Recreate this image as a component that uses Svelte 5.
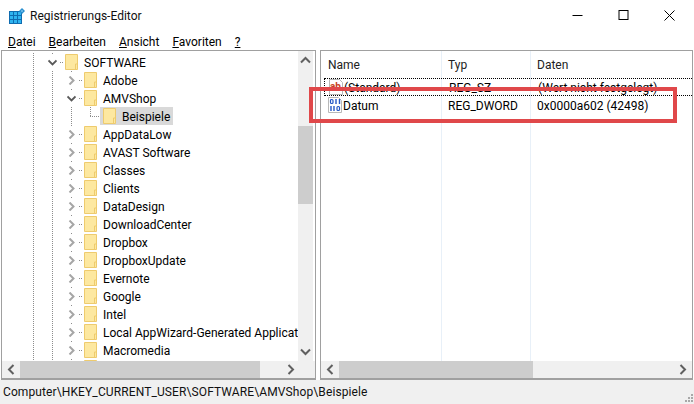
<script lang="ts">
  // Registrierungs-Editor window
  type Row = { name: string; level: number; exp?: "open" | "closed"; selected?: boolean };

  const menu = [
    ["D", "atei"],
    ["B", "earbeiten"],
    ["A", "nsicht"],
    ["F", "avoriten"],
    ["?", ""],
  ];

  const closed = [
    "AppDataLow",
    "AVAST Software",
    "Classes",
    "Clients",
    "DataDesign",
    "DownloadCenter",
    "Dropbox",
    "DropboxUpdate",
    "Evernote",
    "Google",
    "Intel",
    "Local AppWizard-Generated Applicat",
    "Macromedia",
    "",
  ];

  const rows: Row[] = [
    { name: "SOFTWARE", level: 2, exp: "open" },
    { name: "Adobe", level: 3, exp: "closed" },
    { name: "AMVShop", level: 3, exp: "open" },
    { name: "Beispiele", level: 4, selected: true },
    ...closed.map((name): Row => ({ name, level: 3, exp: "closed" })),
  ];
</script>

<div class="window">
  <header class="titlebar">
    <svg class="appicon" width="16" height="16" viewBox="0 0 16 16">
      <rect x="0" y="3" width="13" height="13" fill="#0f6cb0" />
      <path d="M1 4h3v3H1zM5 4h3v3H5zM9 4h3v3H9zM1 8h3v3H1zM5 8h3v3H5zM9 8h3v3H9zM1 12h3v3H1zM5 12h3v3H5zM9 12h3v3H9z" fill="#2fb4f0" />
      <path d="M13 0l3 3-3 3-3-3z" fill="#2a8fd0" />
      <path d="M13 2l1 1-1 1-1-1z" fill="#9fdcf8" />
    </svg>
    <span class="title">Registrierungs-Editor</span>
    <div class="controls">
      <svg width="11" height="11" viewBox="0 0 11 11"><path d="M0.5 5.5h10" stroke="#000" /></svg>
      <svg width="11" height="11" viewBox="0 0 11 11"><rect x="1" y="0.5" width="9" height="9" fill="none" stroke="#000" /></svg>
      <svg width="11" height="11" viewBox="0 0 11 11"><path d="M0.5 0.5l10 10M10.5 0.5l-10 10" stroke="#000" /></svg>
    </div>
  </header>

  <nav class="menubar">
    {#each menu as [key, rest]}
      <span><u>{key}</u>{rest}</span>
    {/each}
  </nav>

  <div class="panes">
    <section class="pane tree-pane">
      <div class="pane-body">
        <div class="tree">
          {#each rows as row}
            <div class="row">
              <span class="guide"></span>
              {#if row.level > 2}
                <span class="guide"></span>
              {/if}
              {#if row.level === 4}
                <span class="guide"></span>
                <span class="elbow"></span>
              {:else}
                <span class="guide exp" class:top={row.level === 2}>
                  <svg width="9" height="9" viewBox="0 0 9 9">
                    {#if row.exp === "open"}
                      <path d="M0.5 2.5l4 4 4-4" fill="none" stroke="#595959" stroke-width="1.8" />
                    {:else}
                      <path d="M2.5 0.5l4 4-4 4" fill="none" stroke="#a6a6a6" stroke-width="2" />
                    {/if}
                  </svg>
                  <i class="tick"></i>
                </span>
              {/if}
              <span class="item" class:selected={row.selected}>
                <svg class="folder" width="13" height="16" viewBox="0 0 13 16">
                  <path d="M0.5 0.5h12v15h-12z" fill="#fde8a0" stroke="#eecb6e" />
                  <path d="M10.5 15v-5h2" fill="none" stroke="#eecb6e" />
                </svg>
                <span class="label">{row.name}</span>
              </span>
            </div>
          {/each}
        </div>
        <div class="vscroll">
          <svg class="arrow" width="11" height="8" viewBox="0 0 11 8"><path d="M1 6.5l4.5-4.5 4.5 4.5" fill="none" stroke="#606060" stroke-width="2" /></svg>
          <div class="vtrack"><div class="vthumb"></div></div>
          <svg class="arrow" width="11" height="8" viewBox="0 0 11 8"><path d="M1 1.5l4.5 4.5 4.5-4.5" fill="none" stroke="#606060" stroke-width="2" /></svg>
        </div>
      </div>
      <div class="hscroll">
        <svg class="arrow" width="8" height="11" viewBox="0 0 8 11"><path d="M6.5 1L2 5.5 6.5 10" fill="none" stroke="#606060" stroke-width="2" /></svg>
        <div class="htrack"><div class="hthumb tree-thumb"></div></div>
        <svg class="arrow" width="8" height="11" viewBox="0 0 8 11"><path d="M1.5 1L6 5.5 1.5 10" fill="none" stroke="#606060" stroke-width="2" /></svg>
        <span class="corner"></span>
      </div>
    </section>

    <section class="pane list-pane">
      <div class="list">
        <div class="cols head">
          <span class="c-name">Name</span>
          <span class="c-typ">Typ</span>
          <span class="c-data">Daten</span>
        </div>
        <div class="cols entry focused">
          <span class="c-name">
            <svg class="valicon" width="16" height="16" viewBox="0 0 16 16">
              <path d="M1.5 0.5h10l3 3v12h-13z" fill="#fff" stroke="#b8b8b8" />
              <text x="2" y="11" class="ab">ab</text>
            </svg>
            <span>(Standard)</span>
          </span>
          <span class="c-typ">REG_SZ</span>
          <span class="c-data">(Wert nicht festgelegt)</span>
        </div>
        <div class="cols entry">
          <span class="c-name">
            <svg class="valicon" width="16" height="16" viewBox="0 0 16 16">
              <path d="M1.5 0.5h10l3 3v12h-13z" fill="#fff" stroke="#b8b8b8" />
              <rect x="3.5" y="2.5" width="2.5" height="4" rx="1" fill="none" stroke="#2457c5" stroke-width="1.2" />
              <path d="M9 2v5M12.5 2v5M4 9v5M7 9v5" stroke="#2457c5" stroke-width="1.4" />
              <rect x="10" y="9.5" width="2.5" height="4" rx="1" fill="none" stroke="#2457c5" stroke-width="1.2" />
            </svg>
            <span>Datum</span>
          </span>
          <span class="c-typ">REG_DWORD</span>
          <span class="c-data">0x0000a602 (42498)</span>
        </div>
        <div class="redbox"></div>
      </div>
      <div class="hscroll">
        <svg class="arrow" width="8" height="11" viewBox="0 0 8 11"><path d="M6.5 1L2 5.5 6.5 10" fill="none" stroke="#606060" stroke-width="2" /></svg>
        <div class="htrack"><div class="hthumb list-thumb"></div></div>
        <svg class="arrow" width="8" height="11" viewBox="0 0 8 11"><path d="M1.5 1L6 5.5 1.5 10" fill="none" stroke="#606060" stroke-width="2" /></svg>
      </div>
    </section>
  </div>

  <footer class="status">
    <span>Computer\HKEY_CURRENT_USER\SOFTWARE\AMVShop\Beispiele</span>
    <svg class="grip" width="8" height="8" viewBox="0 0 8 8">
      <path d="M6 0h2v2H6zM3 3h2v2H3zM6 3h2v2H6zM0 6h2v2H0zM3 6h2v2H3zM6 6h2v2H6z" fill="#a8a8a8" />
    </svg>
  </footer>
</div>

<style>
  :global(body) {
    margin: 0;
  }
  .window {
    width: 694px;
    height: 404px;
    display: flex;
    flex-direction: column;
    background: #fff;
    font-family: Roboto, "Noto Sans", "Liberation Sans", sans-serif;
    font-size: 12px;
    color: #000;
    overflow: hidden;
  }
  .titlebar {
    height: 32px;
    display: flex;
    align-items: center;
    padding-left: 9px;
    flex: none;
  }
  .appicon {
    margin-right: 5px;
  }
  .title {
    color: #111;
  }
  .controls {
    margin-left: auto;
    display: flex;
    gap: 35px;
    padding-right: 19px;
    margin-bottom: 2px;
  }
  .menubar {
    height: 18px;
    flex: none;
    display: flex;
    align-items: center;
    gap: 13px;
    padding: 1px 0 0 8px;
    box-sizing: border-box;
  }
  .panes {
    height: 330px;
    flex: none;
    display: flex;
    gap: 4px;
    padding: 0 1px;
  }
  .pane {
    border: 1px solid #a0a0a0;
    border-bottom-width: 2px;
    display: flex;
    flex-direction: column;
    box-sizing: border-box;
  }
  .tree-pane {
    width: 315px;
    overflow: hidden;
  }
  .list-pane {
    flex: 1;
    min-width: 0;
  }
  .pane-body {
    flex: 1;
    display: flex;
    min-height: 0;
  }
  .tree {
    flex: 1;
    min-width: 0;
    overflow: hidden;
    padding: 2px 0 0 22px;
  }
  .row {
    height: 18px;
    display: flex;
    white-space: nowrap;
  }
  .guide {
    width: 19px;
    flex: none;
    display: flex;
    align-items: center;
    justify-content: center;
    position: relative;
    background-image: linear-gradient(#8c8c8c 50%, transparent 50%);
    background-size: 1px 2px;
    background-repeat: repeat-y;
    background-position: 9px 0;
  }
  .guide.top {
    background-position: 9px 14px;
  }
  .guide.exp svg {
    background: #fff;
    padding: 3px 0;
  }
  .tick {
    position: absolute;
    right: -2px;
    top: 9px;
    width: 4px;
    height: 1px;
    background-image: linear-gradient(90deg, #8c8c8c 50%, transparent 50%);
    background-size: 2px 1px;
  }
  .elbow {
    width: 19px;
    flex: none;
    position: relative;
  }
  .elbow::before {
    content: "";
    position: absolute;
    left: 9px;
    top: 0;
    width: 1px;
    height: 9px;
    background-image: linear-gradient(#8c8c8c 50%, transparent 50%);
    background-size: 1px 2px;
  }
  .elbow::after {
    content: "";
    position: absolute;
    left: 9px;
    top: 9px;
    width: 10px;
    height: 1px;
    background-image: linear-gradient(90deg, #8c8c8c 50%, transparent 50%);
    background-size: 2px 1px;
  }
  .item {
    display: flex;
    align-items: center;
    height: 18px;
    padding-left: 3px;
    padding-right: 3px;
  }
  .folder {
    margin-right: 6px;
  }
  .label {
    padding-top: 1px;
  }
  .selected {
    background: #d9d9d9;
  }
  .vscroll {
    width: 15px;
    flex: none;
    background: #f0f0f0;
    display: flex;
    flex-direction: column;
    align-items: center;
    margin-right: 2px;
  }
  .vscroll .arrow {
    flex: none;
    margin: 5px 0;
  }
  .vtrack {
    flex: 1;
    width: 100%;
    padding-top: 57px;
    box-sizing: border-box;
  }
  .vthumb {
    height: 78px;
    background: #cdcdcd;
  }
  .hscroll {
    height: 17px;
    flex: none;
    background: #f0f0f0;
    display: flex;
    align-items: center;
  }
  .hscroll .arrow {
    flex: none;
    margin: 0 5px;
  }
  .htrack {
    flex: 1;
    height: 100%;
  }
  .hthumb {
    height: 100%;
    background: #cdcdcd;
  }
  .tree-thumb {
    width: 240px;
  }
  .list-thumb {
    width: 194px;
  }
  .corner {
    width: 15px;
    align-self: stretch;
    background: #f0f0f0;
  }
  .list {
    flex: 1;
    position: relative;
    min-height: 0;
    background-image:
      linear-gradient(#e8f0f8, #e8f0f8),
      linear-gradient(#e8f0f8, #e8f0f8);
    background-size: 1px 100%, 1px 100%;
    background-position: 120px 0, 209px 0;
    background-repeat: no-repeat;
  }
  .cols {
    display: flex;
    white-space: nowrap;
  }
  .head {
    height: 26px;
    align-items: center;
    color: #222;
    padding-top: 1px;
    box-sizing: border-box;
  }
  .entry {
    height: 18px;
    align-items: center;
    box-sizing: border-box;
  }
  .focused {
    border: 1px dotted #000;
    border-right: 0;
    margin-left: 3px;
    margin-top: 1px;
  }
  .focused .c-name {
    margin-left: -3px;
  }
  .c-name {
    width: 127px;
    padding-left: 7px;
    box-sizing: border-box;
    display: flex;
    align-items: center;
    flex: none;
  }
  .entry .c-name {
    padding-left: 6px;
  }
  .entry .c-name span {
    padding-top: 1px;
  }
  .entry .c-typ,
  .entry .c-data {
    padding-top: 1px;
  }
  .c-typ {
    width: 89px;
    flex: none;
  }
  .valicon {
    flex: none;
  }
  .ab {
    font-size: 10px;
    font-weight: 700;
    fill: #c8431f;
    font-family: Roboto, sans-serif;
  }
  .redbox {
    position: absolute;
    left: -12px;
    top: 36px;
    width: 368px;
    height: 36px;
    border: 4px solid #e0484a;
    box-sizing: border-box;
  }
  .status {
    flex: 1;
    background: #f0f0f0;
    display: flex;
    align-items: center;
    padding-left: 3px;
    position: relative;
    color: #111;
    letter-spacing: 0.11px;
  }
  .grip {
    position: absolute;
    right: 1px;
    bottom: 2px;
  }
</style>
